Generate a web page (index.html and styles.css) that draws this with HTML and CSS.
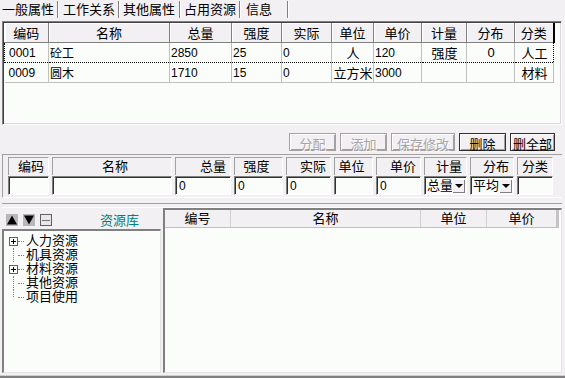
FILE: index.html
```html
<!DOCTYPE html>
<html>
<head>
  <meta charset="UTF-8">
  <title>占用资源</title>
  <link rel="stylesheet" href="styles.css">
</head>
<body>
  <div class="tabs">
    <span class="tab t1">一般属性</span>
    <span class="tab t2">工作关系</span>
    <span class="tab t3">其他属性</span>
    <span class="tab t4 active">占用资源</span>
    <span class="tab t5">信息</span>
  </div>

  <div class="grid-box">
    <table class="grid">
      <colgroup>
        <col style="width:44px"><col style="width:121px"><col style="width:62px"><col style="width:50px"><col style="width:50px">
        <col style="width:42px"><col style="width:48px"><col style="width:45px"><col style="width:48px"><col style="width:39px">
      </colgroup>
      <thead>
        <tr>
          <th>编码</th><th>名称</th><th>总量</th><th>强度</th><th>实际</th>
          <th>单位</th><th>单价</th><th>计量</th><th>分布</th><th class="last">分类</th>
        </tr>
      </thead>
      <tbody>
        <tr class="focus">
          <td class="code">0001</td><td>砼工</td><td>2850</td><td>25</td><td>0</td>
          <td class="c">人</td><td>120</td><td class="c">强度</td><td class="c">0</td><td class="c">人工</td>
        </tr>
        <tr>
          <td class="code">0009</td><td>圆木</td><td>1710</td><td>15</td><td>0</td>
          <td class="c">立方米</td><td>3000</td><td></td><td></td><td class="c">材料</td>
        </tr>
      </tbody>
    </table>
  </div>

  <div class="actions">
    <button type="button" class="btn w-a" disabled>分配</button>
    <button type="button" class="btn w-a" disabled>添加</button>
    <button type="button" class="btn w-b" disabled>保存修改</button>
    <button type="button" class="btn w-a">删除</button>
    <button type="button" class="btn w-c">删全部</button>
  </div>

  <div class="editor">
    <span class="label">编码</span><span class="label">名称</span><span class="label">总量</span>
    <span class="label">强度</span><span class="label">实际</span><span class="label">单位</span>
    <span class="label">单价</span><span class="label">计量</span><span class="label">分布</span>
    <span class="label">分类</span>

    <span class="field"></span><span class="field"></span><span class="field">0</span>
    <span class="field">0</span><span class="field">0</span><span class="field"></span>
    <span class="field">0</span>
    <span class="field combo">总量<i class="drop"></i></span>
    <span class="field combo">平均<i class="drop"></i></span>
    <span class="field"></span>
  </div>

  <div class="splitter"></div>

  <div class="lower">
    <div class="library">
      <div class="lib-bar">
        <span class="tool">
          <svg width="12" height="12" viewBox="0 0 12 12"><rect x="0" y="0" width="12" height="12" fill="#b8b8b8"/><path d="M6 1.5 L11 10.5 L1 10.5 Z" fill="#000"/></svg>
        </span>
        <span class="tool">
          <svg width="12" height="12" viewBox="0 0 12 12"><rect x="0" y="0" width="12" height="12" fill="#b8b8b8"/><path d="M1 1.5 L11 1.5 L6 10.5 Z" fill="#000"/></svg>
        </span>
        <span class="tool">
          <svg width="12" height="12" viewBox="0 0 12 12"><rect x="0.5" y="0.5" width="11" height="11" fill="#e8e8e8" stroke="#606060"/><path d="M2.5 6.5 H10" stroke="#000" stroke-dasharray="1 1"/></svg>
        </span>
        <span class="lib-title">资源库</span>
      </div>
      <div class="tree">
        <div class="node"><span class="plus"></span><span class="dots"></span>人力资源</div>
        <div class="node"><span class="stem"></span><span class="dots"></span>机具资源</div>
        <div class="node"><span class="plus"></span><span class="dots"></span>材料资源</div>
        <div class="node"><span class="stem"></span><span class="dots"></span>其他资源</div>
        <div class="node end"><span class="stem"></span><span class="dots"></span>项目使用</div>
      </div>
    </div>

    <div class="list">
      <div class="list-head">
        <span class="h-no">编号</span>
        <span class="h-name">名称</span>
        <span class="h-unit">单位</span>
        <span class="h-price">单价</span>
      </div>
    </div>
  </div>
</body>
</html>
```

FILE: styles.css
```css
body { margin: 0; width: 565px; height: 378px; overflow: hidden; background: #f2f0f2; font-family: "Liberation Sans", "Noto Sans CJK SC", sans-serif; font-size: 12px; color: #000; position: relative; }

.tabs { height: 20px; display: flex; align-items: flex-start; padding-top: 1px; box-sizing: border-box; }
.tab { height: 17px; line-height: 17px; border-right: 1px solid #808080; box-shadow: 1px 0 0 #fff; font-size: 13px; margin-right: 1px; box-sizing: border-box; white-space: nowrap; }
.t1 { width: 58px; padding-left: 2px; }
.t2 { width: 60px; padding-left: 4px; }
.t3 { width: 60px; padding-left: 3px; }
.t4 { width: 59px; padding-left: 3px; }
.t5 { width: 47px; padding-left: 5px; }

.grid-box { margin: 1px 3px 0 2px; height: 104px; box-sizing: border-box; background: #fbfdfb; border-top: 1px solid #808080; border-left: 1px solid #808080; border-right: 1px solid #fff; border-bottom: 1px solid #fff; box-shadow: inset 1px 1px 0 #404040, inset -1px -1px 0 #d8d8d8; padding: 1px 0 0 1px; }
.grid { border-collapse: collapse; table-layout: fixed; width: 549px; }
.grid th { height: 18px; padding: 0; font-weight: normal; font-size: 13px; background: #f2f0f2; border-right: 1px solid #808080; border-bottom: 1px solid #808080; box-shadow: inset 1px 1px 0 #fff; text-align: center; }
.grid th.last { border-right: 2px solid #000; }
.grid td { height: 17px; padding: 0 0 0 1px; border-right: 1px solid #c0c0c0; border-bottom: 1px solid #c0c0c0; white-space: nowrap; overflow: hidden; font-size: 12px; }
.grid td.code { padding-left: 4px; }
.grid td.c { text-align: center; font-size: 13px; }
.grid tr.focus td { border-top: 1px dotted #000; border-bottom: 1px dotted #000; }
.grid tr.focus td:first-child { border-left: 1px dotted #000; }
.grid tr.focus td:last-child { border-right: 1px dotted #000; }

.actions { display: flex; justify-content: flex-end; gap: 4px; padding: 8px 10px 0 0; height: 18px; }
.btn { height: 18px; padding: 0; font-family: inherit; font-size: 13px; background: #f2f0f2; border: 1px solid #303030; box-shadow: inset 1px 1px 0 #fff, inset -1px -1px 0 #a0a0a0; color: #000; }
.btn:disabled { color: #a8a4a8; border-color: #a8a0a0; text-shadow: 1px 1px 0 #fff; }
.w-a { width: 47px; }
.w-b { width: 64px; }
.w-c { width: 45px; }

.editor { margin: 3px 3px 0 2px; height: 44px; box-sizing: border-box; border-top: 1px solid #a0a0a0; border-left: 1px solid #a0a0a0; border-bottom: 1px solid #fff; padding: 2px 0 0 5px; display: grid; grid-template-columns: 41px 120px 56px 49px 45px 39px 45px 43px 44px 36px; column-gap: 3px; row-gap: 1px; grid-template-rows: 18px 19px; }
.label { border-top: 1px solid #a0a0a0; border-left: 1px solid #a0a0a0; border-right: 1px solid #fff; text-align: right; padding-right: 4px; font-size: 13px; line-height: 17px; }
.label:nth-child(2) { text-align: center; padding-left: 10px; }
.label:nth-child(4), .label:nth-child(6) { text-align: center; }
.field { background: #fbfdfb; border-top: 1px solid #808080; border-left: 1px solid #808080; border-right: 1px solid #fff; border-bottom: 1px solid #fff; box-shadow: inset 1px 1px 0 #303030; padding: 1px 0 0 3px; line-height: 16px; box-sizing: border-box; font-size: 12px; position: relative; }
.field.combo { font-size: 13px; padding-left: 2px; }
.drop { position: absolute; right: 1px; top: 2px; width: 13px; height: 14px; background: #f2f0f2; box-shadow: inset 1px 1px 0 #fff, inset -1px -1px 0 #808080; }
.drop::after { content: ""; position: absolute; left: 3px; top: 5px; border-left: 4px solid transparent; border-right: 4px solid transparent; border-top: 4px solid #000; }

.splitter { margin: 5px 3px 0 2px; height: 3px; border-top: 1px solid #a0a0a0; border-bottom: 1px solid #fff; }

.lower { display: flex; gap: 2px; margin: 0 3px 0 2px; height: 165px; }
.library { width: 159px; display: flex; flex-direction: column; }
.lib-bar { height: 21px; display: flex; align-items: center; gap: 5px; padding: 2px 0 0 4px; box-sizing: border-box; }
.tool { width: 12px; height: 12px; display: block; }
.tool svg { display: block; }
.lib-title { color: #008080; font-size: 13px; margin-left: 43px; }
.tree { flex: 1; background: #fbfdfb; border-top: 2px solid #808080; border-left: 2px solid #808080; border-right: 1px solid #e4e4e4; border-bottom: 1px solid #e4e4e4; padding: 3px 0 0 5px; box-sizing: border-box; }
.node { height: 14px; line-height: 14px; font-size: 13px; display: flex; align-items: center; position: relative; }
.plus { width: 7px; height: 7px; border: 1px solid #606060; background: #fff; position: relative; }
.plus::before { content: ""; position: absolute; left: 1px; top: 3px; width: 5px; height: 1px; background: #000; }
.plus::after { content: ""; position: absolute; left: 3px; top: 1px; width: 1px; height: 5px; background: #000; }
.stem { width: 9px; height: 14px; position: relative; }
.stem::before { content: ""; position: absolute; left: 4px; top: 0; height: 14px; border-left: 1px dotted #808080; }
.node.end .stem::before { height: 7px; }
.dots { width: 6px; border-top: 1px dotted #808080; margin-right: 2px; }

.list { flex: 1; background: #fbfdfb; border-top: 2px solid #808080; border-left: 2px solid #808080; border-right: 1px solid #e4e4e4; border-bottom: 1px solid #e4e4e4; box-sizing: border-box; }
.list-head { display: flex; height: 17px; background: #f2f0f2; border-bottom: 1px solid #c0c0c0; font-size: 13px; line-height: 17px; width: 391px; border-right: 3px solid #c4c4c4; }
.list-head span { text-align: center; border-right: 1px solid #d0d0d0; }
.h-no { width: 65px; }
.h-name { width: 189px; }
.h-unit { width: 65px; }
.h-price { flex: 1; border-right: none !important; }

body::after { content: ""; position: absolute; left: 0; right: 0; bottom: 0; height: 2px; background: #808080; border-top: 1px solid #d0d0d0; }
```
